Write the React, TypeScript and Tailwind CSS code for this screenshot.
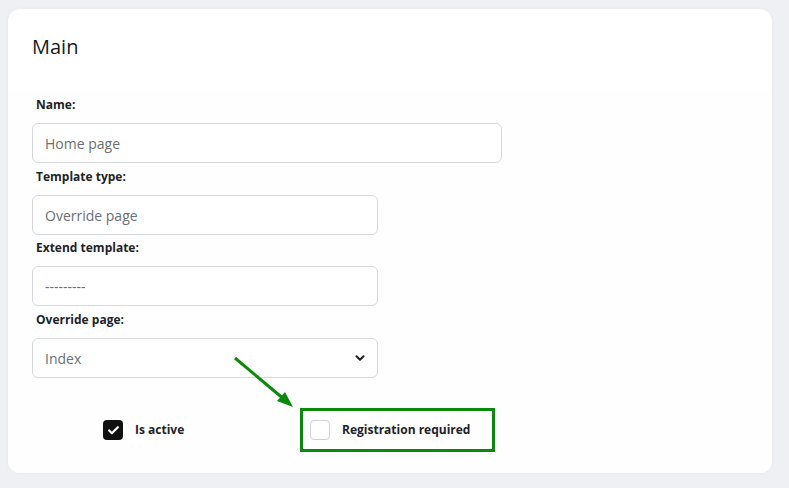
import { ChevronDown, Check } from "lucide-react";

const font = { fontFamily: '"Open Sans", "Noto Sans", sans-serif' };

function Field({ label, value, wide, select, className = "" }: { label: string; value: string; wide?: boolean; select?: boolean; className?: string }) {
  return (
    <div className={`flex flex-col ${className}`}>
      <label className="pl-[4px] h-[16px] leading-[16px] text-[12px] font-bold text-[#1f2328] mb-[10px]">{label}</label>
      <div
        className={`h-[40px] ${wide ? "w-[470px]" : "w-[346px]"} rounded-[6px] border border-[#d5d8dc] bg-white flex items-center justify-between pl-[12px] pr-[10px]`}
      >
        <span className="text-[14px] text-[#6b6f75]">{value}</span>
        {select && <ChevronDown size={14} strokeWidth={3.5} className="text-[#222]" />}
      </div>
    </div>
  );
}

export default function App() {
  return (
    <div className="w-[789px] h-[488px] bg-[#eef0f3] pt-[9px] pl-[8px] overflow-hidden" style={font}>
      <div className="w-[764px] h-[464px] bg-white rounded-[12px] shadow-[0_0_4px_rgba(0,0,0,0.04)] flex flex-col overflow-hidden">
        {/* Header */}
        <div className="h-[82px] pl-[24px] pt-[24px]">
          <h2 className="text-[20px] leading-[28px] text-[#1a1a1a]">Main</h2>
        </div>

        {/* Body */}
        <div className="flex-1 bg-[#fdfefd] pl-[24px] pt-[6px] flex flex-col">
          <Field label="Name:" value="Home page" wide />
          <Field label="Template type:" value="Override page" className="mt-[6px]" />
          <Field label="Extend template:" value="---------" className="mt-[5px]" />
          <Field label="Override page:" value="Index" select className="mt-[6px]" />

          <div className="relative flex items-center mt-[30px] h-[44px]">
            <div className="flex items-center gap-[12px] ml-[71px] w-[197px]">
              <div className="w-[20px] h-[20px] rounded-[4px] bg-[#111] flex items-center justify-center">
                <Check size={13} strokeWidth={4} className="text-white" />
              </div>
              <span className="text-[12px] font-bold text-[#1f2328]">Is active</span>
            </div>
            <div className="h-[44px] w-[195px] border-[3px] border-[#0a8a0a] flex items-center gap-[12px] pl-[7px]">
              <div className="w-[20px] h-[20px] rounded-[4px] border border-[#cfd3d8] bg-white" />
              <span className="text-[12px] font-bold text-[#1f2328]">Registration required</span>
            </div>

            {/* annotation arrow */}
            <svg className="absolute left-[201px] top-[-52px]" width="64" height="56" viewBox="0 0 64 56">
              <line x1="2" y1="2" x2="52" y2="44" stroke="#0a8a0a" strokeWidth="3" />
              <polygon points="60,51 44,45 52,36" fill="#0a8a0a" />
            </svg>
          </div>
        </div>
      </div>
    </div>
  );
}
